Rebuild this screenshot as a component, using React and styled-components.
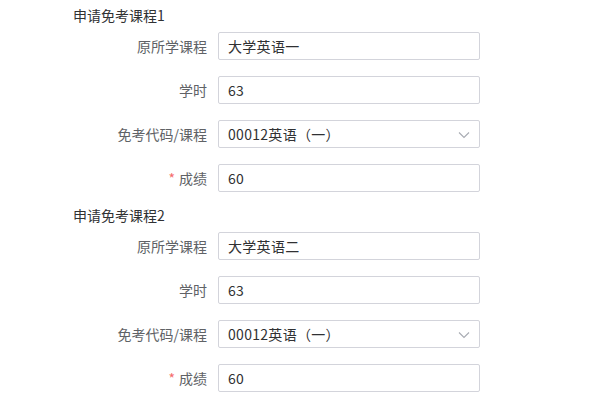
import React from 'react';
import styled, { createGlobalStyle } from 'styled-components';

const GlobalStyle = createGlobalStyle`
  body {
    margin: 0;
    background: #fff;
    font-family: "Noto Sans CJK SC", "Noto Sans", sans-serif;
  }
`;

const courses = [
  { title: '申请免考课程1', original: '大学英语一', hours: '63', code: '00012英语（一）', score: '60' },
  { title: '申请免考课程2', original: '大学英语二', hours: '63', code: '00012英语（一）', score: '60' },
];

const Page = styled.div`
  padding: 5px 0 0 73px;
  width: 407px;
`;

const Group = styled.section`
  margin-bottom: 13px;
`;

const Title = styled.div`
  height: 20px;
  line-height: 20px;
  font-size: 14px;
  color: #303133;
  margin-bottom: 7px;
`;

const Row = styled.div`
  display: flex;
  align-items: center;
  height: 28px;
  margin-bottom: 16px;

  &:last-child {
    margin-bottom: 0;
  }
`;

const Label = styled.label`
  width: 145px;
  padding-right: 11px;
  box-sizing: border-box;
  text-align: right;
  font-size: 14px;
  color: #606266;
  flex-shrink: 0;
`;

const Star = styled.span`
  color: #f56c6c;
  margin-right: 4px;
`;

const Field = styled.div`
  position: relative;
  width: 262px;
  height: 28px;
  box-sizing: border-box;
  border: 1px solid #d3d4db;
  border-radius: 2px;
  padding: 0 9px;
  display: flex;
  align-items: center;
  font-size: 14px;
  color: #303133;
  letter-spacing: 0.3px;
`;

const Chevron = styled.svg`
  position: absolute;
  right: 9px;
  top: 8px;
`;

function FormRow({ label, required, value, select }) {
  return (
    <Row>
      <Label>
        {required && <Star>*</Star>}
        {label}
      </Label>
      <Field>
        {value}
        {select && (
          <Chevron width="12" height="12" viewBox="0 0 12 12">
            <path d="M1 3.5 L6 8.5 L11 3.5" fill="none" stroke="#a8abb2" strokeWidth="1.1" />
          </Chevron>
        )}
      </Field>
    </Row>
  );
}

export default function App() {
  return (
    <Page>
      <GlobalStyle />
      {courses.map((c) => (
        <Group key={c.title}>
          <Title>{c.title}</Title>
          <FormRow label="原所学课程" value={c.original} />
          <FormRow label="学时" value={c.hours} />
          <FormRow label="免考代码/课程" value={c.code} select />
          <FormRow label="成绩" value={c.score} required />
        </Group>
      ))}
    </Page>
  );
}
